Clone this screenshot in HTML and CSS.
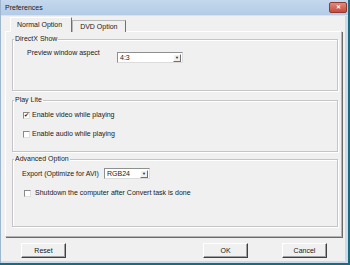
FILE: index.html
```html
<!DOCTYPE html>
<html lang="en">
<head>
    <meta charset="UTF-8">
    <title>Preferences</title>
    <link rel="stylesheet" href="styles.css">
</head>
<body>
    <div class="window">
        <div class="titlebar">
            <span class="title">Preferences</span>
            <span class="close">&#x2715;</span>
        </div>
        <div class="client">
            <div class="tabs">
                <div class="tab active">Normal Option</div>
                <div class="tab">DVD Option</div>
            </div>

            <div class="panel">
                <!-- DirectX -->
                <fieldset class="group g1">
                    <legend>DirectX Show</legend>
                    <div class="row aspect-row">
                        <span class="label aspect-label">Preview window aspect</span>
                        <div class="select aspect-select">
                            <span class="value">4:3</span>
                            <span class="arrow">&#9660;</span>
                        </div>
                    </div>
                </fieldset>

                <!-- Play Lite -->
                <fieldset class="group g2">
                    <legend>Play Lite</legend>
                    <div class="check first">
                        <span class="box checked">&#10004;</span>
                        <span>Enable video while playing</span>
                    </div>
                    <div class="check">
                        <span class="box"></span>
                        <span>Enable audio while playing</span>
                    </div>
                </fieldset>

                <!-- Advanced -->
                <fieldset class="group g3">
                    <legend>Advanced Option</legend>
                    <div class="row export-row">
                        <span class="label export-label">Export (Optimize for AVI)</span>
                        <div class="select export-select">
                            <span class="value">RGB24</span>
                            <span class="arrow">&#9660;</span>
                        </div>
                    </div>
                    <div class="check shutdown">
                        <span class="box"></span>
                        <span>Shutdown the computer after Convert task is done</span>
                    </div>
                </fieldset>
            </div>

            <div class="buttons">
                <button class="btn reset">Reset</button>
                <button class="btn ok">OK</button>
                <button class="btn cancel">Cancel</button>
            </div>
        </div>
    </div>
</body>
</html>
```

FILE: styles.css
```css
body {
    margin: 0;
    width: 350px;
    height: 265px;
    overflow: hidden;
    background: #1f6a7a;
    font-family: "Liberation Sans", Arial, sans-serif;
    font-size: 7px;
    color: #1a1a1a;
}
.window {
    width: 348px;
    height: 263px;
    background: #f0f0f0;
    border-left: 1px solid #9fb6cf;
    box-sizing: border-box;
    display: flex;
    flex-direction: column;
}
.titlebar {
    height: 15px;
    background: linear-gradient(#c4d8ee, #b3cbe6);
    border-bottom: 1px solid #d6e3f1;
    display: flex;
    align-items: center;
    padding-left: 4px;
    flex-shrink: 0;
}
.title {
    flex: 1;
}
.close {
    width: 16px;
    height: 9px;
    margin-right: 1px;
    background: linear-gradient(#e08a7e, #c64c3c);
    border: 1px solid #8f3b30;
    border-radius: 2px;
    color: white;
    font-size: 6px;
    font-weight: bold;
    line-height: 9px;
    text-align: center;
}
.client {
    flex: 1;
    padding: 2px 3px 0 3px;
    border-right: 3px solid #c9dbee;
    border-bottom: 2px solid #c9dbee;
}
.tabs {
    display: flex;
    height: 13px;
    padding-left: 6px;
    align-items: flex-end;
}
.tab {
    height: 11px;
    padding: 0 7px;
    line-height: 11px;
    border: 1px solid #b8b8b8;
    border-bottom: none;
    border-right-color: #6f6f6f;
    background: #f0f0f0;
    position: relative;
    top: 1px;
}
.tab.active {
    height: 14px;
    line-height: 13px;
    padding: 0 9px 0 6px;
    border-left-color: #ffffff;
    border-top-color: #ffffff;
    z-index: 1;
}
.panel {
    height: 206px;
    box-sizing: border-box;
    margin-left: 1px;
    width: 337px;
    border: 1px solid #b5b5b5;
    border-top-color: #ffffff;
    border-left-color: #ffffff;
    box-shadow: 1px 1px 0 #6a6a6a;
    padding: 3px 3px 0 6px;
}
.group {
    margin: 0;
    padding: 0;
    border: 1px solid #c5c5c5;
    box-shadow: inset 1px 1px 0 #ffffff, 1px 1px 0 #ffffff;
    box-sizing: border-box;
}
.group legend {
    padding: 0 1px;
    margin-left: 1px;
    line-height: 8px;
}
.g1 {
    height: 56px;
}
.g2 {
    height: 56px;
    margin-top: 5px;
}
.g3 {
    height: 72px;
    margin-top: 3px;
}
.row {
    display: flex;
    align-items: flex-start;
}
.label {
    line-height: 8px;
}
.aspect-row {
    margin-top: 6px;
    padding-left: 14px;
}
.aspect-label {
    width: 90px;
}
.select {
    height: 11px;
    background: #ffffff;
    border: 1px solid #8e8f8f;
    border-right-color: #dcdcdc;
    border-bottom-color: #dcdcdc;
    display: flex;
    align-items: center;
    box-sizing: border-box;
}
.select .value {
    flex: 1;
    padding-left: 2px;
    line-height: 9px;
}
.select .arrow {
    width: 8px;
    height: 8px;
    margin-right: 1px;
    background: #f0f0f0;
    border: 1px solid #ffffff;
    border-right-color: #707070;
    border-bottom-color: #707070;
    box-sizing: border-box;
    font-size: 4px;
    line-height: 6px;
    text-align: center;
}
.aspect-select {
    width: 66px;
    margin-top: 3px;
}
.check {
    display: flex;
    align-items: center;
    line-height: 8px;
    padding-left: 10px;
    margin-top: 11px;
}
.check.first {
    margin-top: 7px;
}
.box {
    width: 7px;
    height: 7px;
    box-sizing: border-box;
    background: #ffffff;
    border: 1px solid #8a8a8a;
    border-right-color: #e0e0e0;
    border-bottom-color: #e0e0e0;
    margin-right: 2px;
    font-size: 6px;
    line-height: 5px;
    text-align: center;
    color: #222;
}
.export-row {
    margin-top: 5px;
    padding-left: 9px;
}
.export-label {
    width: 82px;
    margin-top: 2px;
}
.export-select {
    width: 46px;
}
.check.shutdown {
    padding-left: 11px;
    margin-top: 10px;
}
.check.shutdown .box {
    margin-right: 4px;
}
.buttons {
    display: flex;
    margin-top: 6px;
    padding-left: 17px;
}
.btn {
    width: 45px;
    height: 15px;
    padding: 0;
    font-family: inherit;
    font-size: 7px;
    color: #1a1a1a;
    background: #f0f0f0;
    border: 1px solid #ffffff;
    border-right-color: #404040;
    border-bottom-color: #404040;
    box-shadow: inset -1px -1px 0 #a0a0a0;
}
.ok {
    margin-left: 137px;
}
.cancel {
    margin-left: 34px;
}
```
